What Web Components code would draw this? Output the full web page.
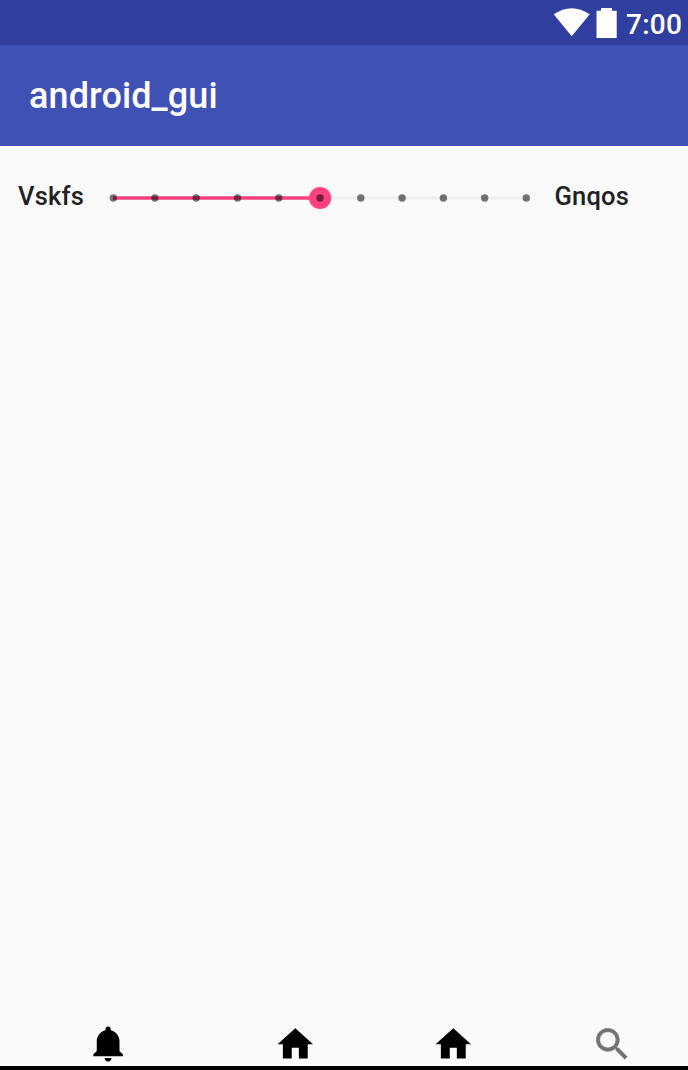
<!DOCTYPE html>
<html lang="en"><head><meta charset="utf-8"><title>android_gui</title>
<style>html,body{margin:0;height:100%}body{font-family:Roboto,"Liberation Sans",sans-serif;overflow:hidden}</style></head>
<body><app-screen></app-screen>
<script>
const define=(name,html)=>customElements.define(name,class extends HTMLElement{
  constructor(){super();const t=document.createElement('template');t.innerHTML=html;this.attachShadow({mode:'open'}).append(t.content.cloneNode(true));}
});
define('status-bar',`<style>:host{display:flex;height:45px;box-sizing:border-box;background:#303f9f;color:#fff;justify-content:flex-end;padding-right:6px}
svg{display:block;width:80px;height:45px;flex:none}span{width:56px;font-size:28px;font-weight:500;line-height:50px;white-space:nowrap;letter-spacing:.25px}</style>
<svg viewBox="546 0 80 45" fill="#fff"><path d="M553.7 14.2Q571.7 2.2 589.7 14.2L571.7 36.3Z"/><path d="M601 8h11v2.7h4.7v27.3h-20.2V10.7h4.5z"/></svg><span>7:00</span>`);
define('app-bar',`<style>:host{display:flex;align-items:center;height:101px;box-sizing:border-box;background:#3f51b5;color:#fff;padding-left:29px;font-size:36px;font-weight:500;line-height:42px;letter-spacing:.1px}</style><slot></slot>`);
customElements.define('discrete-slider',class extends HTMLElement{
  constructor(){super();
    const n=10,v=5,step=41.3,x=i=>5.3+i*step+(i>0&&i<=v?.3:0)-(i>v&&i<n?.3:0);
    let dots='';for(let i=0;i<=n;i++)dots+=`<circle cx="${x(i)}" cy="15" r="3.7"/>`;
    this.attachShadow({mode:'open'}).innerHTML=`<style>:host{display:block;width:424px;height:30px}svg{display:block}</style>
    <svg width="424" height="30"><path d="M5 15H${x(n)}" stroke="#f0f0f0" stroke-width="3.6"/><path d="M5 15H${x(v)}" stroke="#ff4081" stroke-width="3.6"/><circle cx="${x(v)}" cy="15" r="11.1" fill="#ff4081"/><g fill="#000" fill-opacity=".54">${dots}</g></svg>`;}
});
define('slider-row',`<style>:host{display:flex;align-items:center;height:30px;padding:37px 0 0 18px;color:#212121;font-size:25.5px;font-weight:500;line-height:30px;letter-spacing:.2px}
.start{width:90.3px}.end{margin-left:22.2px}span{margin-top:-4px}</style><span class="start"><slot name="start"></slot></span><discrete-slider></discrete-slider><span class="end"><slot name="end"></slot></span>`);
customElements.define('nav-icon',class extends HTMLElement{
  connectedCallback(){
    const p={bell:'M11.5 22c1.1 0 2-.9 2-2h-4c0 1.1.9 2 2 2zm6.5-6v-5.5c0-3.07-2.13-5.64-5-6.32V3.5c0-.83-.67-1.5-1.5-1.5S10 2.67 10 3.5v.68c-2.87.68-5 3.25-5 6.32V16l-2 2v1h17v-1l-2-2z',
    home:'M10 20v-6h4v6h5v-8h3L12 3 2 12h3v8z',
    search:'M15.5 14h-.79l-.28-.27C15.41 12.59 16 11.11 16 9.5 16 5.91 13.09 3 9.5 3S3 5.91 3 9.5 5.91 16 9.5 16c1.61 0 3.09-.59 4.23-1.57l.27.28v.79l5 4.99L20.49 19l-4.99-5zm-6 0C7.01 14 5 11.99 5 9.5S7.01 5 9.5 5 14 7.01 14 9.5 11.99 14 9.5 14z'};
    const name=this.getAttribute('name');
    this.attachShadow({mode:'open'}).innerHTML=`<style>:host{display:block;width:42.6px;height:42.6px}:host([name=bell]){width:42px;height:42px;margin-top:.5px}svg{display:block;width:100%;height:100%}</style><svg viewBox="0 0 24 24" fill="currentColor"${name==='search'?' stroke="currentColor" stroke-width=".25"':''}><path d="${p[name]}"/></svg>`;}
});
define('bottom-nav',`<style>:host{display:grid;grid-template-columns:186.6px 158.3px 158.3px 50px;height:43px;padding-left:88px;color:#000}.s{color:#737373;margin-left:-.5px}nav-icon.h{margin-left:-.9px}</style>
<nav-icon name="bell"></nav-icon><nav-icon class="h" name="home"></nav-icon><nav-icon class="h" name="home"></nav-icon><nav-icon class="s" name="search"></nav-icon>`);
define('app-screen',`<style>:host{display:flex;flex-direction:column;width:688px;height:1070px;background:#fafafa}main{flex:1}footer{height:4.5px;background:#000}</style>
<status-bar></status-bar><app-bar>android_gui</app-bar><main><slider-row><span slot="start">Vskfs</span><span slot="end">Gnqos</span></slider-row></main><bottom-nav></bottom-nav><footer></footer>`);
</script></body></html>
